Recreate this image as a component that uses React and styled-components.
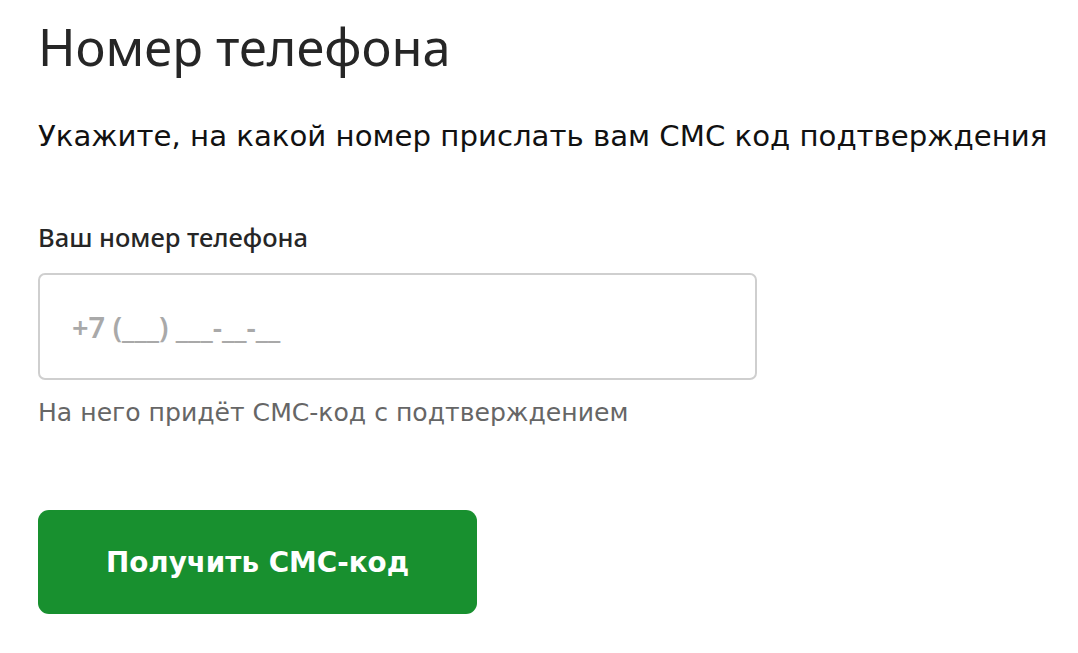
import React from 'react';
import styled, { createGlobalStyle } from 'styled-components';

const GlobalStyle = createGlobalStyle`
  body {
    margin: 0;
    background: #fff;
    font-family: "DejaVu Sans", sans-serif;
  }
`;

const Page = styled.div`
  padding: 17px 38px;
  display: flex;
  flex-direction: column;
`;

const Title = styled.h1`
  margin: 0;
  font-family: "Noto Sans", sans-serif;
  font-weight: 400;
  font-size: 50.5px;
  line-height: 60px;
  color: #262626;
`;

const Lead = styled.p`
  margin: 41px 0 0;
  font-family: "DejaVu Sans", sans-serif;
  font-size: 29.2px;
  line-height: 36px;
  color: #111;
  white-space: nowrap;
`;

const Field = styled.div`
  margin-top: 67px;
  display: flex;
  flex-direction: column;
  width: 719px;
`;

const Label = styled.label`
  font-family: "Noto Sans", sans-serif;
  font-weight: 500;
  font-size: 25.5px;
  line-height: 32px;
  color: #262626;
`;

const Input = styled.input`
  margin-top: 20px;
  height: 107px;
  box-sizing: border-box;
  border: 2px solid #cfcfcf;
  border-radius: 7px;
  padding: 0 32px;
  font-family: "Noto Sans", sans-serif;
  font-weight: 600;
  font-size: 29px;
  color: #262626;
  outline: none;

  &::placeholder {
    color: #a9a9a9;
  }
`;

const Hint = styled.span`
  margin-top: 17px;
  font-family: "DejaVu Sans", sans-serif;
  font-size: 25.1px;
  line-height: 32px;
  color: #666;
  white-space: nowrap;
`;

const Button = styled.button`
  margin-top: 81px;
  width: 439px;
  height: 104px;
  border: none;
  border-radius: 11px;
  background: #18902f;
  color: #fff;
  font-family: "DejaVu Sans", sans-serif;
  font-weight: 700;
  font-size: 27.8px;
  cursor: pointer;
`;

export default function App() {
  return (
    <>
      <GlobalStyle />
      <Page>
        <Title>Номер телефона</Title>
        <Lead>Укажите, на какой номер прислать вам СМС код подтверждения</Lead>
        <Field>
          <Label>Ваш номер телефона</Label>
          <Input placeholder="+7 (___) ___-__-__" />
          <Hint>На него придёт СМС-код с подтверждением</Hint>
        </Field>
        <Button>Получить СМС-код</Button>
      </Page>
    </>
  );
}
